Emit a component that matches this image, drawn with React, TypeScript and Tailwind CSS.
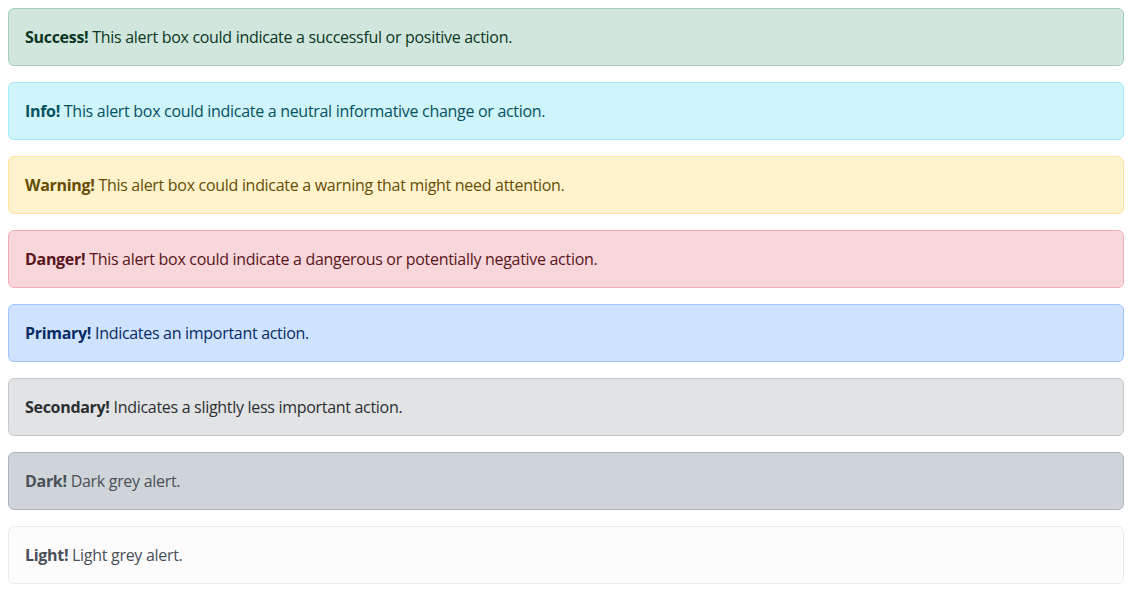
const alerts = [
  { label: 'Success!', text: 'This alert box could indicate a successful or positive action.', cls: 'bg-[#d1e7dd] border-[#a3cfbb] text-[#0a3622]' },
  { label: 'Info!', text: 'This alert box could indicate a neutral informative change or action.', cls: 'bg-[#cff4fc] border-[#9eeaf9] text-[#055160]' },
  { label: 'Warning!', text: 'This alert box could indicate a warning that might need attention.', cls: 'bg-[#fff3cd] border-[#ffe69c] text-[#664d03]' },
  { label: 'Danger!', text: 'This alert box could indicate a dangerous or potentially negative action.', cls: 'bg-[#f8d7da] border-[#f1aeb5] text-[#58151c]' },
  { label: 'Primary!', text: 'Indicates an important action.', cls: 'bg-[#cfe2ff] border-[#9ec5fe] text-[#052c65]' },
  { label: 'Secondary!', text: 'Indicates a slightly less important action.', cls: 'bg-[#e2e3e5] border-[#c4c8cb] text-[#2b2f32]' },
  { label: 'Dark!', text: 'Dark grey alert.', cls: 'bg-[#ced4da] border-[#adb5bd] text-[#495057]' },
  { label: 'Light!', text: 'Light grey alert.', cls: 'bg-[#fcfcfd] border-[#e9ecef] text-[#495057]' },
];

export default function App() {
  return (
    <div className="min-h-screen bg-white p-2 font-['Open_Sans',sans-serif] text-base leading-6 tracking-[-0.3px]">
      {alerts.map((a) => (
        <div key={a.label} className={`mb-4 rounded-md border p-4 ${a.cls}`}>
          <strong className="font-bold">{a.label}</strong> {a.text}
        </div>
      ))}
    </div>
  );
}
